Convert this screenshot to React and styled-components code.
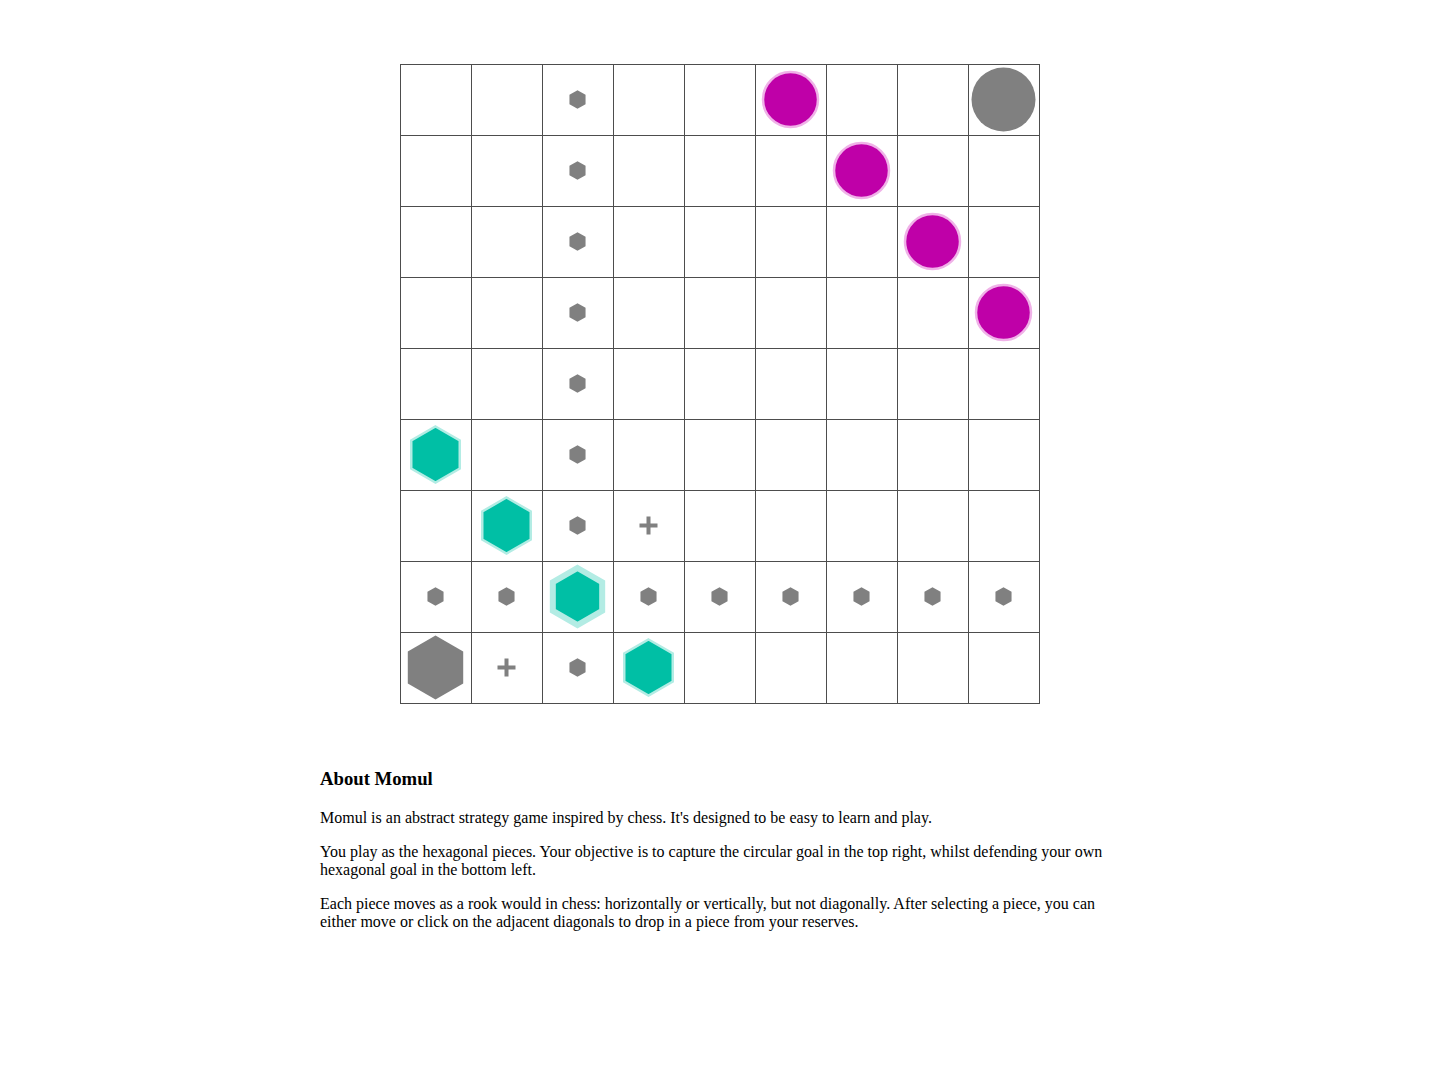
import React from 'react'
import styled, { createGlobalStyle } from 'styled-components'

const GlobalStyle = createGlobalStyle`
    body {
        margin: 0;
        background: #fff;
        font-family: "Liberation Serif", "Times New Roman", serif;
        color: #000;
    }
`

const Page = styled.div`
    padding-top: 64px;
    padding-bottom: 60px;
`

const Board = styled.div`
    width: fit-content;
    margin: 0 auto;
    display: grid;
    grid-template-columns: repeat(9, 70px);
    grid-auto-rows: 70px;
    gap: 1px;
    padding: 1px;
    background: #4d4d4d;
`

const Cell = styled.div`
    background: #fff;
    display: flex;
    align-items: center;
    justify-content: center;
    cursor: ${p => (p.clickable ? 'pointer' : 'default')};
`

const PieceSvg = styled.svg`
    width: 70px;
    height: 70px;
    display: block;
`

const About = styled.section`
    width: 800px;
    margin: 0 auto;
    padding-top: 64px;

    h3 {
        font-size: 18.72px;
        margin: 0 0 18.72px;
    }

    p {
        font-size: 16px;
        margin: 0 0 16px;
    }
`

const GREY = '#808080'
const TEAL = '#00bfa5'
const TEAL_LIGHT = '#b3ece4'
const MAGENTA = '#bf00a8'
const MAGENTA_LIGHT = '#f0b2e8'

// pieces sit half a pixel up-left of the cell centre, as in the original
const CX = 34.5
const CY = 34.5

const hexPoints = r => {
    const w = (r * Math.sqrt(3)) / 2
    return [
        [CX, CY - r],
        [CX + w, CY - r / 2],
        [CX + w, CY + r / 2],
        [CX, CY + r],
        [CX - w, CY + r / 2],
        [CX - w, CY - r / 2],
    ].map(p => p.join(',')).join(' ')
}

const Piece = ({ type }) => {
    switch (type) {
        case 'dot':
            return <polygon points={hexPoints(9.3)} fill={GREY} />
        case 'hex':
            return <polygon points={hexPoints(28)} fill={TEAL} stroke={TEAL_LIGHT} strokeWidth="2.5" />
        case 'sel':
            return <polygon points={hexPoints(28.5)} fill={TEAL} stroke={TEAL_LIGHT} strokeWidth="6" />
        case 'hexGoal':
            return <polygon points={hexPoints(32)} fill={GREY} />
        case 'circle':
            return <circle cx={CX} cy={CY} r="27.5" fill={MAGENTA} stroke={MAGENTA_LIGHT} strokeWidth="2.5" />
        case 'circleGoal':
            return <circle cx={CX} cy={CY} r="32" fill={GREY} />
        case 'plus':
            return (
                <g fill={GREY}>
                    <rect x={CX - 9} y={CY - 2} width="18" height="4" />
                    <rect x={CX - 2} y={CY - 9} width="4" height="18" />
                </g>
            )
        default:
            return null
    }
}

// d = small drop marker, h = hexagon piece, s = selected, H = hex goal,
// c = circle piece, C = circle goal, + = move target
const layout = [
    '..d..c..C',
    '..d...c..',
    '..d....c.',
    '..d.....c',
    '..d......',
    'h.d......',
    '.hd+.....',
    'ddsdddddd',
    'H+dh.....',
]

const codes = {
    d: 'dot',
    h: 'hex',
    s: 'sel',
    H: 'hexGoal',
    c: 'circle',
    C: 'circleGoal',
    '+': 'plus',
}

export default function App() {
    return (
        <Page>
            <GlobalStyle />
            <Board>
                {layout.map((row, r) =>
                    row.split('').map((ch, c) => {
                        const type = codes[ch]
                        return (
                            <Cell key={`${r}-${c}`} clickable={!!type}>
                                {type && (
                                    <PieceSvg viewBox="0 0 70 70">
                                        <Piece type={type} />
                                    </PieceSvg>
                                )}
                            </Cell>
                        )
                    })
                )}
            </Board>
            <About>
                <h3>About Momul</h3>
                <p>Momul is an abstract strategy game inspired by chess. It's designed to be easy to learn and play.</p>
                <p>You play as the hexagonal pieces. Your objective is to capture the circular goal in the top right, whilst defending your own hexagonal goal in the bottom left.</p>
                <p>Each piece moves as a rook would in chess: horizontally or vertically, but not diagonally. After selecting a piece, you can either move or click on the adjacent diagonals to drop in a piece from your reserves.</p>
            </About>
        </Page>
    )
}
